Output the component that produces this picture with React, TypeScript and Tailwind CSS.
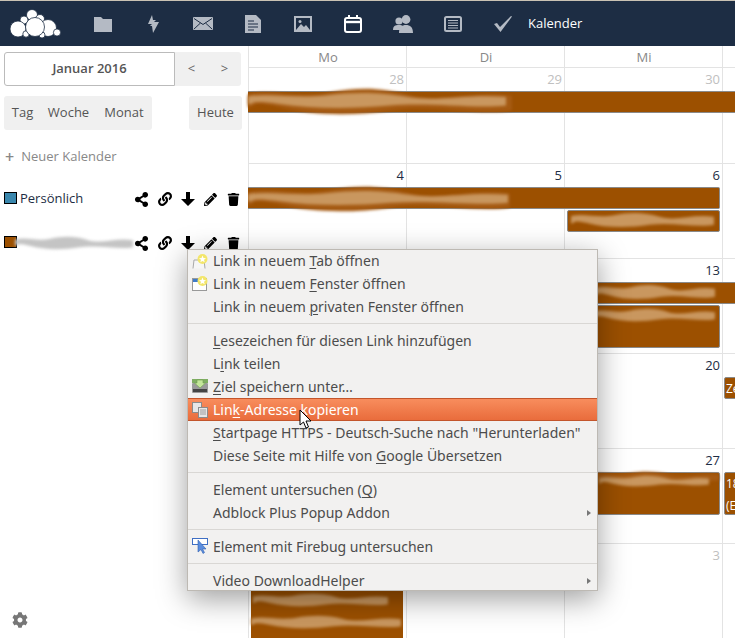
import React from 'react';
import { FaShareAlt, FaLink, FaPencilAlt, FaTrash, FaCog } from 'react-icons/fa';

const Logo = () => (
  <svg width="54" height="30" viewBox="0 0 54 30" className="ml-[9px]">
    <g fill="#fff" stroke="#1d2d44" strokeWidth="0.8">
      <circle cx="23" cy="6" r="5.500" />
      <circle cx="31" cy="10" r="4.500" />
      <circle cx="15" cy="11" r="4" />
      <circle cx="9" cy="20" r="8" />
      <circle cx="39" cy="19" r="8.500" />
      <circle cx="48" cy="23.500" r="3.600" />
      <circle cx="17" cy="25" r="3.200" />
      <circle cx="33" cy="26" r="3" />
      <circle cx="26" cy="18" r="9.500" />
    </g>
  </svg>
);

const navIcons = [
  <svg width="18" height="16" viewBox="0 0 18 16" fill="#b4bac4"><path d="M0 1h7l2 2h9v13H0z" /></svg>,
  <svg width="12" height="18" viewBox="0 0 12 18" fill="#b4bac4"><path d="M5 0 1 9h4l-2 2h2l1 7 6-11H7l2-2H6z" /></svg>,
  <svg width="20" height="13" viewBox="0 0 20 13"><rect width="20" height="13" rx="1" fill="#b4bac4" /><path d="M1 1.500l9 6 9-6M1 12l6.500-6M19 12l-6.500-6" fill="none" stroke="#1d2d44" strokeWidth="1" /></svg>,
  <svg width="16" height="18" viewBox="0 0 16 18" fill="#b4bac4"><path d="M0 0h11l5 5v13H0z" /><path d="M3 6h6M3 9h10M3 12h10M3 15h6" stroke="#1d2d44" strokeWidth="1.200" /></svg>,
  <svg width="18" height="16" viewBox="0 0 18 16"><rect width="18" height="16" fill="#b4bac4" /><rect x="2" y="2" width="14" height="12" fill="#1d2d44" /><path d="M2 14l5-6 3 3 2-2 4 5z" fill="#b4bac4" /><circle cx="6" cy="5.500" r="1.500" fill="#b4bac4" /></svg>,
  <svg width="18" height="18" viewBox="0 0 18 18" fill="none" stroke="#fff" strokeWidth="2"><rect x="1" y="3" width="16" height="14" rx="2" /><path d="M1 7h16" strokeWidth="2.400" /><path d="M5 0v4M13 0v4" /></svg>,
  <svg width="20" height="18" viewBox="0 0 20 18" fill="#b4bac4"><circle cx="6" cy="6" r="3.600" /><circle cx="13" cy="4.500" r="4.400" /><path d="M0 15c0-4 2-5 6-5s5 2 5 5zM6 18c0-6 3-8 7-8s7 2 7 8z" /></svg>,
  <svg width="18" height="16" viewBox="0 0 18 16" fill="none" stroke="#b4bac4"><rect x="1" y="1" width="16" height="14" rx="1.500" strokeWidth="2" /><path d="M4 4.500h10M4 7h10M4 9.500h10M4 12h10" strokeWidth="1" /></svg>,
  <svg width="18" height="16" viewBox="0 0 18 16" fill="#b4bac4"><path d="M0 8l3-1 3 4L17 0l1 .5L6.500 16z" /></svg>,
];

const Nav = () => (
  <div className="flex h-[45px] items-center bg-[#1d2d44]">
    <div className="w-[78px]"><Logo /></div>
    {navIcons.map((icon, i) => (
      <div key={i} className="flex w-[50px] justify-center">{icon}</div>
    ))}
    <span className="text-[13px] text-white">Kalender</span>
  </div>
);

const BtnBase = 'flex h-[34px] items-center justify-center bg-[#f0f0f0] text-[13px] text-[#555]';

const CalendarRow = ({ color, children }: { color: string; children: React.ReactNode }) => (
  <div className="flex h-[24px] items-center pl-1 pr-[3px]">
    <span className="mb-[2px] h-[12px] w-[13px] shrink-0 border border-black" style={{ background: color }} />
    <div className="relative flex-1 pl-[3px] text-[13px] text-[#1d2d44]">{children}</div>
    <div className="grid w-[115px] grid-cols-5 place-items-center text-black">
      <FaShareAlt className="text-[15px]" />
      <FaLink className="text-[14px]" />
      <svg width="14" height="14" viewBox="0 0 14 14" fill="#000"><path d="M5 0h4v7h5l-7 7-7-7h5z" /></svg>
      <FaPencilAlt className="text-[13px]" />
      <FaTrash className="text-[13px]" />
    </div>
  </div>
);

// blurred-out text, same blob stretched to whatever box it is given
const blob = 'M0 2.500C10 .5 18 4 30 2S50 0 62 3 85 1 100 3L100 8C88 10 70 6 55 8S25 10 12 7 3 8 0 7Z';

const Smear = ({ className, fill = '#c9975f' }: { className: string; fill?: string }) => (
  <svg viewBox="0 0 100 10" preserveAspectRatio="none" className={'pointer-events-none absolute blur-[1.5px] ' + className}>
    <path d={blob} fill={fill} />
  </svg>
);

const Sidebar = () => (
  <aside className="relative w-[248px] shrink-0 bg-white pt-[6px]">
    <div className="flex pl-1">
      <div className="flex h-[34px] w-[171px] items-center justify-center rounded-l-[3px] border border-[#bbb] text-[13px] font-semibold text-[#555]">
        Januar 2016
      </div>
      <div className={BtnBase + ' w-[33px] text-[#666]'}>&lt;</div>
      <div className={BtnBase + ' w-[33px] rounded-r-[3px] text-[#666]'}>&gt;</div>
    </div>
    <div className="mt-[10px] flex pl-1">
      <div className={BtnBase + ' w-[37px] rounded-l-[3px]'}>Tag</div>
      <div className={BtnBase + ' w-[55px]'}>Woche</div>
      <div className={BtnBase + ' w-[56px] rounded-r-[3px]'}>Monat</div>
      <div className={BtnBase + ' ml-[37px] w-[53px] rounded-[3px]'}>Heute</div>
    </div>
    <div className="mt-[17px] flex items-center gap-[7px] pl-[5px] text-[13px] text-[#888]">
      <span className="text-[16px] font-semibold leading-[20px]">+</span> Neuer Kalender
    </div>
    <div className="mt-[20px]">
      <CalendarRow color="#3a87ad">Persönlich</CalendarRow>
    </div>
    <div className="mt-[20px]">
      <CalendarRow color="#9c5000">
        <span className="block h-[14px]" />
        <Smear className="-left-[2px] top-0 h-[14px] w-[118px]" fill="#c4c4c4" />
      </CalendarRow>
    </div>
    <FaCog className="absolute bottom-[10px] left-3 text-[16px] text-[#777]" />
  </aside>
);

const Event = ({ className, children }: { className: string; children?: React.ReactNode }) => (
  <div className={'relative border border-[#8a8a8a] bg-[#9c5000] text-[12px] leading-[22px] text-white ' + className}>
    {children}
  </div>
);

const Day = ({ n, muted }: { n?: number; muted?: boolean }) => (
  <div className={'h-[23px] pr-[2px] pt-[2px] text-right text-[13px] leading-[18px] ' + (muted ? 'text-[#c0c0c0]' : 'text-[#1d2d44]')}>
    {n}
  </div>
);

// days covered by the context menu are left out
const Week = ({ days, muted, className, children }: { days: (number | undefined)[]; muted?: boolean; className: string; children?: React.ReactNode }) => (
  <div className={'grid grid-cols-[158px_158px_158px_13px] grid-rows-[23px_23px_23px_1fr] overflow-hidden border-b border-[#e3e3e3] bg-[linear-gradient(to_right,#e3e3e3_1px,transparent_1px)] bg-[length:158px_100%] ' + className}>
    {days.map((d, i) => (
      <Day key={i} n={d} muted={muted} />
    ))}
    <div />
    {children}
  </div>
);

const Calendar = () => (
  <main className="flex-1 overflow-hidden">
    <div className="grid h-[22px] grid-cols-[158px_158px_158px_13px] border-b border-[#e3e3e3] bg-[linear-gradient(to_right,#e3e3e3_1px,transparent_1px)] bg-[length:158px_100%] text-center text-[13px] leading-[22px] text-[#888]">
      <div className="pl-[2px]">Mo</div>
      <div className="pl-[2px]">Di</div>
      <div className="pl-[2px]">Mi</div>
    </div>
    <Week days={[28, 29, 30]} muted className="h-[96px]">
      <Event className="col-span-4 row-start-2 h-[22px] border-x-0" />
    </Week>
    <Week days={[4, 5, 6]} className="h-[95px]">
      <Event className="col-span-3 row-start-2 mr-[2px] h-[22px] rounded-r-[2px] border-l-0">
        <Smear className="-top-[3px] left-0 h-[28px] w-[262px]" fill="#a55a12" />
        <Smear className="left-0 top-[2px] h-[16px] w-[260px]" />
      </Event>
      <Event className="col-start-3 row-start-3 mx-[2px] ml-[3px] h-[22px] rounded-[2px]">
        <Smear className="left-[3px] top-[1px] h-[16px] w-[143px]" />
      </Event>
    </Week>
    <Week days={[undefined, undefined, 13]} className="h-[95px]">
      <Event className="col-span-3 col-start-2 row-start-2 h-[22px] border-r-0">
        <Smear className="right-[20px] top-[1px] h-[16px] w-[120px]" />
      </Event>
      <Event className="col-start-3 row-start-3 row-span-2 mx-[2px] ml-[3px] h-[43px] rounded-[2px]">
        <Smear className="right-[4px] top-[2px] h-[14px] w-[122px]" />
      </Event>
    </Week>
    <Week days={[undefined, undefined, 20]} className="h-[95px]">
      <Event className="col-start-4 row-start-2 ml-[2px] h-[22px] w-[20px] rounded-l-[2px] pl-px">Ze</Event>
    </Week>
    <Week days={[undefined, undefined, 27]} className="h-[95px]">
      <Event className="col-start-3 row-start-2 row-span-3 mx-[2px] ml-[3px] h-[43px] rounded-[2px]">
        <Smear className="-top-[2px] right-0 h-[12px] w-[130px]" fill="#a55a12" />
        <Smear className="right-[10px] top-[2px] h-[12px] w-[110px]" />
      </Event>
      <Event className="col-start-4 row-start-2 row-span-3 ml-[2px] h-[43px] w-[20px] rounded-l-[2px] pl-px">
        18<br />(E
      </Event>
    </Week>
    <Week days={[undefined, undefined, 3]} muted className="h-[95px]">
      <Event className="col-start-1 row-start-2 row-span-3 ml-[3px] mr-[3px] h-[72px] border-0">
        <Smear className="left-[2px] top-[26px] h-[14px] w-[135px]" />
        <Smear className="left-0 top-[48px] h-[14px] w-[150px]" />
      </Event>
    </Week>
  </main>
);

const Star = ({ x, y }: { x: number; y: number }) => (
  <g transform={`translate(${x} ${y})`}>
    <circle r="5" fill="#f3e66a" />
    <path d="M0-3.500 1-1l2.500.2-2 1.600.7 2.500L0 2-2.200 3.300l.7-2.500-2-1.600L-1-1z" fill="#fff" />
  </g>
);

const TabIcon = () => (
  <svg width="17" height="16" viewBox="0 0 17 16">
    <path d="M1 15.500 2 7h10l1 8.500" fill="#f6f6f6" stroke="#a8a8a8" />
    <Star x={10.500} y={6} />
  </svg>
);
const WindowIcon = () => (
  <svg width="17" height="16" viewBox="0 0 17 16">
    <rect x=".5" y="3.500" width="14" height="12" fill="#fff" stroke="#999" />
    <rect x="1" y="4" width="13" height="3" fill="#3f7cc9" />
    <Star x={10.500} y={6} />
  </svg>
);
const SaveIcon = () => (
  <svg width="16" height="16" viewBox="0 0 16 16">
    <rect y="1" width="16" height="4" fill="#7fae62" />
    <rect y="5" width="16" height="10" rx="1" fill="#9a9a9a" />
    <rect x="1" y="11" width="14" height="3" fill="#444" />
    <path d="M5 2h6v3h2.500L8 10 2.500 5H5z" fill="#c4e79a" stroke="#6f9c52" strokeWidth=".6" />
  </svg>
);
const CopyIcon = () => (
  <svg width="16" height="16" viewBox="0 0 16 16" fill="#e6e6e6" stroke="#8a8a8a">
    <rect x=".5" y=".5" width="9" height="10" />
    <rect x="6.500" y="5.500" width="9" height="10" />
    <path d="M8 8h6M8 10h6M8 12h6" strokeWidth=".8" />
  </svg>
);
const FirebugIcon = () => (
  <svg width="16" height="16" viewBox="0 0 16 16">
    <rect x=".5" y=".5" width="15" height="6" fill="#fff" stroke="#3f6fc4" />
    <path d="M6 2v12l3-2.500 2 4 1.500-1-2-3.500H14z" fill="#5b8dde" stroke="#2f5fb0" strokeWidth=".6" />
  </svg>
);

type Item = { label: React.ReactNode; icon?: React.ReactNode; active?: boolean; sub?: boolean } | null;

const U = ({ children }: { children: string }) => (
  <span className="underline decoration-1 underline-offset-2">{children}</span>
);

const menu: Item[] = [
  { label: <>Link in neuem <U>T</U>ab öffnen</>, icon: <TabIcon /> },
  { label: <>Link in neuem <U>F</U>enster öffnen</>, icon: <WindowIcon /> },
  { label: <>Link in neuem <U>p</U>rivaten Fenster öffnen</> },
  null,
  { label: <><U>L</U>esezeichen für diesen Link hinzufügen</> },
  { label: <>L<U>i</U>nk teilen</> },
  { label: <><U>Z</U>iel speichern unter…</>, icon: <SaveIcon /> },
  { label: <>Lin<U>k</U>-Adresse kopieren</>, icon: <CopyIcon />, active: true },
  { label: <><U>S</U>tartpage HTTPS - Deutsch-Suche nach "Herunterladen"</> },
  { label: <>Diese Seite mit Hilfe von <U>G</U>oogle Übersetzen</> },
  null,
  { label: <>Element untersuchen (<U>Q</U>)</> },
  { label: 'Adblock Plus Popup Addon', sub: true },
  null,
  { label: 'Element mit Firebug untersuchen', icon: <FirebugIcon /> },
  null,
  { label: 'Video DownloadHelper', sub: true },
];

const ContextMenu = () => (
  <div className="absolute left-[187px] top-[249px] flex w-[411px] flex-col border border-[#bdb9b3] bg-[#f2f1f0] font-['Noto_Sans',sans-serif] text-[14px] text-[#4c4c4c] shadow-[0_8px_28px_rgba(0,0,0,0.38)]">
    {menu.map((item, i) =>
      item === null ? (
        <div key={i} className="flex h-[11px] items-center">
          <div className="h-px w-full bg-[#d9d7d4]" />
        </div>
      ) : (
        <div
          key={i}
          className={
            'relative flex h-[23px] shrink-0 items-center pl-[25px] first:h-[22px] first:pb-[2px] last:h-[21px] last:pt-[2px] ' +
            (item.active ? 'border-y border-[#c3552b] bg-[linear-gradient(#f88d5d,#e96c3c)] text-white' : '')
          }
        >
          {item.icon && <span className="absolute left-1 top-[3px]">{item.icon}</span>}
          <span>{item.label}</span>
          {item.sub && (
            <span className="absolute right-[6px] top-[9px] h-0 w-0 border-y-[3px] border-l-[4px] border-y-transparent border-l-[#777]" />
          )}
        </div>
      ),
    )}
  </div>
);

const Cursor = () => (
  <svg width="14" height="20" viewBox="0 0 14 20" className="absolute left-[299px] top-[409px]">
    <path d="M1 1v15l3.500-3 2.500 6 2.500-1-2.500-6H12z" fill="#fff" stroke="#000" strokeWidth="1" />
  </svg>
);

// week 1 bar is smeared past its own edges, so it sits on top of the grid
const TopSmear = () => (
  <>
    <Smear className="left-[248px] top-[87px] h-[29px] w-[264px]" fill="#a55a12" />
    <Smear className="left-[248px] top-[92px] h-[17px] w-[258px]" />
  </>
);

export default function App() {
  return (
    <div className="relative h-[638px] w-[735px] overflow-hidden bg-white font-['Open_Sans',sans-serif]">
      <div className="h-px bg-[#c9c2b4]" />
      <Nav />
      <div className="flex h-[592px]">
        <Sidebar />
        <Calendar />
      </div>
      <TopSmear />
      <ContextMenu />
      <Cursor />
    </div>
  );
}
